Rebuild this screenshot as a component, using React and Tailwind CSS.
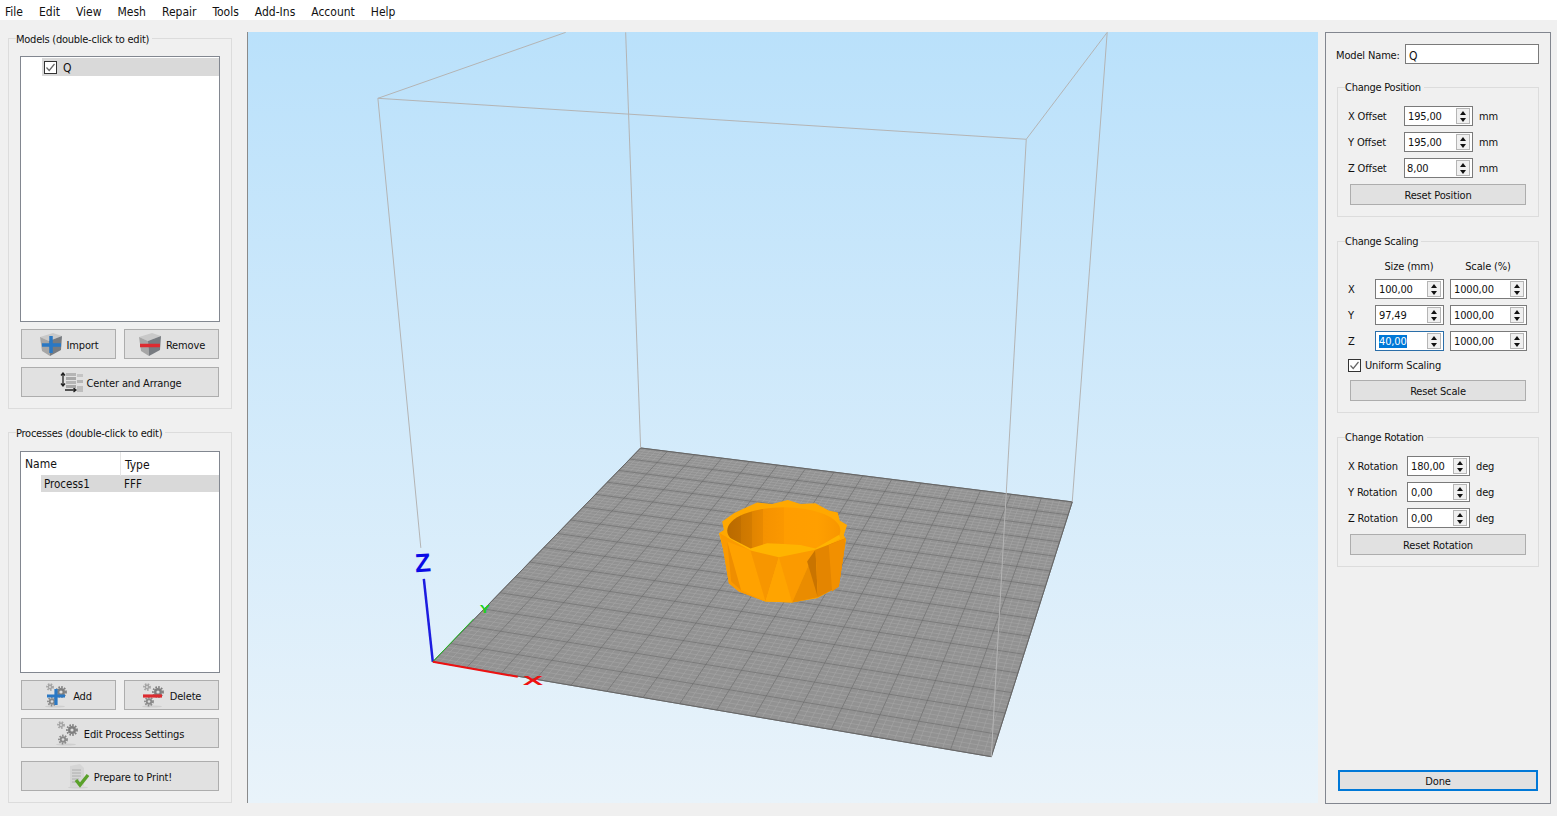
import React from "react";

const MENU = ["File", "Edit", "View", "Mesh", "Repair", "Tools", "Add-Ins", "Account", "Help"];

// square -> quad homography for the build plate
const plate = [[432, 662], [991, 757], [1072, 502], [640, 448]];
function makeProject() {
  const [[x0, y0], [x1, y1], [x2, y2], [x3, y3]] = plate;
  const dx1 = x1 - x2, dx2 = x3 - x2, sx = x0 - x1 + x2 - x3;
  const dy1 = y1 - y2, dy2 = y3 - y2, sy = y0 - y1 + y2 - y3;
  const den = dx1 * dy2 - dx2 * dy1;
  const g = (sx * dy2 - dx2 * sy) / den;
  const h = (dx1 * sy - sx * dy1) / den;
  const a = x1 - x0 + g * x1, b = x3 - x0 + h * x3;
  const d = y1 - y0 + g * y1, e = y3 - y0 + h * y3;
  return (u, v) => {
    const w = g * u + h * v + 1;
    return [(a * u + b * v + x0) / w, (d * u + e * v + y0) / w];
  };
}

function gridPath(count) {
  const p = makeProject();
  let out = "";
  for (let i = 0; i <= count; i++) {
    const t = i / count;
    const [a, b] = p(t, 0), [c, d] = p(t, 1);
    const [e, f] = p(0, t), [g, h] = p(1, t);
    out += `M${a.toFixed(1)} ${b.toFixed(1)}L${c.toFixed(1)} ${d.toFixed(1)}M${e.toFixed(1)} ${f.toFixed(1)}L${g.toFixed(1)} ${h.toFixed(1)}`;
  }
  return out;
}

function Cup() {
  return (
    <g transform="translate(700 490) scale(0.3333)">
      <defs>
        <linearGradient id="cupInner" x1="0" x2="1" y1="0" y2="0">
          <stop offset="0" stopColor="#b96a00" />
          <stop offset="0.12" stopColor="#c27000" />
          <stop offset="0.12" stopColor="#cc7700" />
          <stop offset="0.22" stopColor="#d47c00" />
          <stop offset="0.22" stopColor="#e08400" />
          <stop offset="0.32" stopColor="#ea8a00" />
          <stop offset="0.32" stopColor="#f59200" />
          <stop offset="0.5" stopColor="#fb9800" />
          <stop offset="0.5" stopColor="#ff9d00" />
          <stop offset="0.8" stopColor="#ff9f00" />
          <stop offset="1" stopColor="#f89600" />
        </linearGradient>
      </defs>
      <polygon fill="#ffa800" points="65,95 100,70 125,58 170,38 215,42 262,30 300,42 345,40 385,62 412,68 418,92 440,105 430,135 437,150 430,190 415,290 350,325 275,338 195,335 115,305 85,280 68,180 55,130 70,120" />
      <ellipse cx="250" cy="122" rx="170" ry="70" fill="url(#cupInner)" />
      <polygon fill="#ffb400" points="80,140 150,176 200,160 250,162 300,165 345,176 415,135 420,145 350,186 235,204 150,188 75,150" />
      <polygon fill="#fb9a00" points="58,130 150,182 195,335 115,305 85,280 68,180" />
      <polygon fill="#ffa200" points="80,155 150,182 195,335 120,300" />
      <polygon fill="#ef8e00" points="80,155 122,302 92,275" />
      <polygon fill="#f79600" points="150,182 235,202 195,335" />
      <polygon fill="#ffa400" points="235,202 275,338 195,335" />
      <polygon fill="#fb9a00" points="235,202 345,180 275,338" />
      <polygon fill="#ea8c00" points="345,180 352,322 275,338" />
      <polygon fill="#c97400" points="345,180 320,215 352,322" />
      <polygon fill="#e48500" points="345,180 435,145 430,190 415,290 352,322" />
      <polygon fill="#f29000" points="385,165 395,305 415,290 430,190 435,145" />
    </g>
  );
}

function Scene() {
  return (
    <svg className="block w-full h-full" viewBox="247 32 1071 771">
      <polygon points={plate.map((p) => p.join(",")).join(" ")} fill="#929292" />
      <path d={gridPath(75)} stroke="#a6a6a6" strokeWidth="0.6" fill="none" />
      <path d={gridPath(15)} stroke="#6a6a6a" strokeWidth="0.7" fill="none" />
      <path d="M432 662L991 757L1072 502L640 448Z" stroke="#666" strokeWidth="1" fill="none" />
      <g stroke="#b4b4b4" strokeWidth="1" fill="none">
        <path d="M377 98L1026 139L1107 32M377 98L565 32M625 32L640 448M1026 139L991 757M1107 32L1072 502M377 98L420 548" />
      </g>
      <Cup />
      <path d="M423 579L432 662" stroke="#1c1ce0" strokeWidth="2.5" fill="none" />
      <path d="M432 662L473 619" stroke="#22c022" strokeWidth="1" fill="none" />
      <path d="M432 662L517 677" stroke="#ee1111" strokeWidth="2" fill="none" />
      <text x="414" y="572" fill="#0a0ae6" fontFamily="'Liberation Sans', sans-serif" fontWeight="700" fontSize="26" transform="rotate(-4 421 562)">Z</text>
      <text transform="translate(479 613) scale(1.4 1)" fill="#1bd11b" fontFamily="'Liberation Sans', sans-serif" fontWeight="700" fontSize="11">Y</text>
      <text transform="translate(522 685) scale(1.8 0.8)" fill="#ee1111" fontFamily="'Liberation Sans', sans-serif" fontWeight="700" fontSize="17">X</text>
    </svg>
  );
}

function CubeIcon({ kind }) {
  return (
    <svg width="24" height="25" viewBox="0 0 24 25" className="shrink-0">
      <polygon points="1,5 14,1 23,4 10,9" fill="#c9c9c9" />
      <polygon points="1,5 10,9 11,24 3,19" fill="#a6a6a6" />
      <polygon points="10,9 23,4 22,18 11,24" fill="#777b80" />
      {kind === "plus" ? (
        <path d="M12 4v17M3 13h19" stroke="#2a78c4" strokeWidth="3.5" />
      ) : (
        <path d="M2 13.5h20" stroke="#dc2b30" strokeWidth="3.5" />
      )}
    </svg>
  );
}

function Gear({ x, y, r, tone }) {
  return (
    <g>
      <circle cx={x} cy={y} r={r} fill="none" stroke={tone} strokeWidth="1.8" strokeDasharray="1.6 1.3" />
      <circle cx={x} cy={y} r={r * 0.8} fill={tone} />
      <circle cx={x} cy={y} r={r * 0.32} fill="#dedede" />
    </g>
  );
}

function GearsIcon({ kind }) {
  return (
    <svg width="24" height="25" viewBox="0 0 24 25" className="shrink-0">
      <ellipse cx="10" cy="23.5" rx="10" ry="1" fill="#cfcfcf" />
      <Gear x={5} y={4} r={3} tone="#a5a5a5" />
      <Gear x={16} y={9} r={5} tone="#7f7f7f" />
      <Gear x={7} y={18.5} r={4} tone="#8a8a8a" />
      {kind === "plus" && <path d="M11 6v16M2 13h18" stroke="#2a78c4" strokeWidth="3.2" />}
      {kind === "minus" && <path d="M1 13h19" stroke="#dc2b30" strokeWidth="3.2" />}
    </svg>
  );
}

function ArrangeIcon() {
  return (
    <svg width="24" height="21" viewBox="0 0 24 21" className="shrink-0">
      <path d="M4 1v13M2 3.5L4 1l2 2.5M2 11.5L4 14l2-2.5" stroke="#222" strokeWidth="1.3" fill="none" />
      <path d="M6 18h11M14.5 16l2.5 2-2.5 2" stroke="#222" strokeWidth="1.3" fill="none" />
      <rect x="7" y="1" width="10" height="3" fill="#b5b5b5" />
      <rect x="7" y="5" width="10" height="3" fill="#a8a8a8" />
      <rect x="7" y="9" width="10" height="3" fill="#b5b5b5" />
      <rect x="7" y="13" width="10" height="3" fill="#a8a8a8" />
      <rect x="18" y="2" width="6" height="3" fill="#c4c4c4" />
      <rect x="18" y="8" width="6" height="3" fill="#b5b5b5" />
      <rect x="18" y="14" width="6" height="6" fill="#bdbdbd" />
    </svg>
  );
}

function PrintIcon() {
  return (
    <svg width="22" height="25" viewBox="0 0 22 25" className="shrink-0">
      <ellipse cx="10" cy="23.5" rx="10" ry="1" fill="#d0d0d0" />
      <polygon points="2,2 12,0 16,4 16,22 2,23" fill="#d5d5d5" />
      <path d="M4 6h9M4 9h9M4 12h9M4 15h7M4 18h6" stroke="#aeaeae" strokeWidth="1" />
      <path d="M8 16l4 5 8-10" stroke="#5aa12a" strokeWidth="3.4" fill="none" />
    </svg>
  );
}

function Button({ className = "", icon, textPad = "pt-[3px]", children }) {
  return (
    <button type="button" className={`flex items-center justify-center gap-1 bg-[#e1e1e1] border border-[#adadad] text-[#111] ${className}`}>
      {icon}
      <span className={textPad}>{children}</span>
    </button>
  );
}

function CheckBox() {
  return (
    <span className="flex items-center justify-center w-[13px] h-[13px] bg-white border border-[#333] shrink-0">
      <svg width="11" height="11" viewBox="0 0 11 11">
        <path d="M1.5 5.5L4.2 8.5L9.5 2" stroke="#666" strokeWidth="1.2" fill="none" />
      </svg>
    </span>
  );
}

function Spin({ value, width, selected, pad = "pl-[3px]" }) {
  return (
    <div className={`flex items-center shrink-0 h-[20px] bg-white border ${selected ? "border-[#2b6ea8]" : "border-[#7a7a7a]"} ${width} pr-[2px] ${pad}`}>
      <span className="flex-1 min-w-0 leading-[18px] pt-[1px]">
        {selected ? <span className="bg-[#0078d7] text-white">{value}</span> : value}
      </span>
      <span className="flex flex-col items-center justify-center gap-[3px] w-[14px] h-[16px] bg-[#f0f0f0] border border-[#b5b5b5]">
        <span className="w-0 h-0 border-x-[3px] border-x-transparent border-b-[4px] border-b-[#111]" />
        <span className="w-0 h-0 border-x-[3px] border-x-transparent border-t-[4px] border-t-[#111]" />
      </span>
    </div>
  );
}

function Group({ title, className = "", legend = "ml-[-4px] pt-[1px]", children }) {
  return (
    <fieldset className={`min-w-0 border border-[#dcdcdc] ${className}`}>
      <legend className={`pr-[3px] h-[15px] leading-[15px] tracking-[-0.25px] text-[#111] ${legend}`}>{title}</legend>
      {children}
    </fieldset>
  );
}

function OffsetRow({ label, value, pad }) {
  return (
    <div className="flex items-center h-[20px]">
      <span className="w-[56px] pt-[2px]">{label}</span>
      <Spin value={value} width="w-[69px]" pad={pad} />
      <span className="ml-[6px] pt-[2px]">mm</span>
    </div>
  );
}

function ScaleRow({ axis, size, selected }) {
  return (
    <div className="flex items-center h-[20px]">
      <span className="w-[27px] pt-[2px]">{axis}</span>
      <Spin value={size} width="w-[69px]" selected={selected} />
      <Spin value="1000,00" width="w-[77px] ml-[6px]" />
    </div>
  );
}

function RotationRow({ label, value }) {
  return (
    <div className="flex items-center h-[20px]">
      <span className="w-[59px] pt-[2px]">{label}</span>
      <Spin value={value} width="w-[63px]" />
      <span className="ml-[6px] pt-[2px]">deg</span>
    </div>
  );
}

export default function App() {
  const sideLegend = "ml-[-3px] pt-0";
  return (
    <div className="w-[1557px] h-[816px] overflow-hidden bg-[#f0f0f0] text-[11px] tracking-[-0.15px] text-[#111] font-['DejaVu_Sans_Condensed','Noto_Sans',sans-serif]">
      <nav className="flex items-center h-[20px] bg-white pl-[5px] pt-[3px] gap-[16px] text-[12px] tracking-normal">
        {MENU.map((m) => (
          <span key={m}>{m}</span>
        ))}
      </nav>

      <div className="flex h-[796px]">
        <aside className="w-[247px] shrink-0 pl-[8px] pr-[15px] pt-[11px] flex flex-col gap-[16px]">
          <Group title="Models (double-click to edit)" className="h-[378px] px-[11px]">
            <div className="h-[266px] mt-[10px] bg-white border border-[#828790] pt-[1px] pl-[21px]">
              <div className="flex items-center h-[18px] bg-[#d9d9d9] pl-[2px] gap-[6px]">
                <CheckBox />
                <span className="pt-[1px] text-[12px]">Q</span>
              </div>
            </div>
            <div className="flex gap-[8px] mt-[7px] ml-[1px]">
              <Button className="w-[95px] h-[30px]" textPad="pt-[5px]" icon={<CubeIcon kind="plus" />}>Import</Button>
              <Button className="w-[95px] h-[30px]" textPad="pt-[5px]" icon={<CubeIcon kind="minus" />}>Remove</Button>
            </div>
            <Button className="w-[198px] h-[30px] mt-[8px] ml-[1px]" textPad="pt-[5px]" icon={<ArrangeIcon />}>Center and Arrange</Button>
          </Group>

          <Group title="Processes (double-click to edit)" className="h-[378px] px-[11px]">
            <div className="h-[222px] mt-[11px] bg-white border border-[#828790] text-[12px] tracking-normal">
              <div className="flex h-[23px] items-center">
                <span className="w-[100px] pl-[4px] border-r border-[#e5e5e5] leading-[23px] pt-[1px]">Name</span>
                <span className="pl-[4px] pt-[3px]">Type</span>
              </div>
              <div className="flex items-center h-[17px] ml-[20px] bg-[#d9d9d9] pl-[3px] pt-[2px] text-[11.5px]">
                <span className="w-[80px]">Process1</span>
                <span>FFF</span>
              </div>
            </div>
            <div className="flex gap-[8px] mt-[7px] ml-[1px]">
              <Button className="w-[95px] h-[30px]" textPad="pt-[5px]" icon={<GearsIcon kind="plus" />}>Add</Button>
              <Button className="w-[95px] h-[30px]" textPad="pt-[5px]" icon={<GearsIcon kind="minus" />}>Delete</Button>
            </div>
            <Button className="w-[198px] h-[30px] mt-[8px] ml-[1px]" textPad="pt-[5px]" icon={<GearsIcon />}>Edit Process Settings</Button>
            <Button className="w-[198px] h-[30px] mt-[13px] ml-[1px]" textPad="pt-[5px]" icon={<PrintIcon />}>Prepare to Print!</Button>
          </Group>
        </aside>

        <main className="w-[1071px] h-[771px] mt-[12px] shrink-0 border-l border-[#8a8a8a] bg-gradient-to-b from-[#bae1fb] to-[#e9f3fa]">
          <Scene />
        </main>

        <section className="w-[226px] h-[772px] mt-[12px] ml-[7px] shrink-0 border border-[#82868f] px-[11px] pt-[10px] flex flex-col">
          <div className="flex items-center h-[21px] ml-[-1px]">
            <span className="w-[69px] shrink-0 pt-[5px]">Model Name:</span>
            <div className="w-[134px] h-[20px] bg-white border border-[#7a7a7a] pl-[3px] leading-[18px] pt-[2px] text-[12px]">Q</div>
          </div>

          <Group title="Change Position" legend={sideLegend} className="h-[137px] mt-[16px] w-[202px] px-[10px]">
            <div className="flex flex-col gap-[6px] mt-[11px]">
              <OffsetRow label="X Offset" value="195,00" />
              <OffsetRow label="Y Offset" value="195,00" />
              <OffsetRow label="Z Offset" value="8,00" pad="pl-[2px]" />
            </div>
            <Button className="w-[176px] h-[21px] mt-[6px] ml-[2px]">Reset Position</Button>
          </Group>

          <Group title="Change Scaling" legend={sideLegend} className="h-[179px] mt-[17px] w-[202px] px-[10px]">
            <div className="flex h-[16px] items-center mt-[9px] text-center pt-[2px]">
              <span className="ml-[26px] w-[70px]">Size (mm)</span>
              <span className="ml-[5px] w-[78px]">Scale (%)</span>
            </div>
            <div className="flex flex-col gap-[6px] mt-[5px]">
              <ScaleRow axis="X" size="100,00" />
              <ScaleRow axis="Y" size="97,49" />
              <ScaleRow axis="Z" size="40,00" selected />
            </div>
            <div className="flex items-center gap-[4px] h-[14px] mt-[7px]">
              <CheckBox />
              <span className="pt-[2px]">Uniform Scaling</span>
            </div>
            <Button className="w-[176px] h-[21px] mt-[8px] ml-[2px]">Reset Scale</Button>
          </Group>

          <Group title="Change Rotation" legend={sideLegend} className="h-[137px] mt-[17px] w-[202px] px-[10px]">
            <div className="flex flex-col gap-[6px] mt-[11px]">
              <RotationRow label="X Rotation" value="180,00" />
              <RotationRow label="Y Rotation" value="0,00" />
              <RotationRow label="Z Rotation" value="0,00" />
            </div>
            <Button className="w-[176px] h-[21px] mt-[6px] ml-[2px]">Reset Rotation</Button>
          </Group>

          <button type="button" className="mt-auto mb-[12px] ml-[1px] w-[200px] h-[21px] pt-[2px] bg-[#e1e1e1] border-2 border-[#0078d7]">Done</button>
        </section>
      </div>
    </div>
  );
}
